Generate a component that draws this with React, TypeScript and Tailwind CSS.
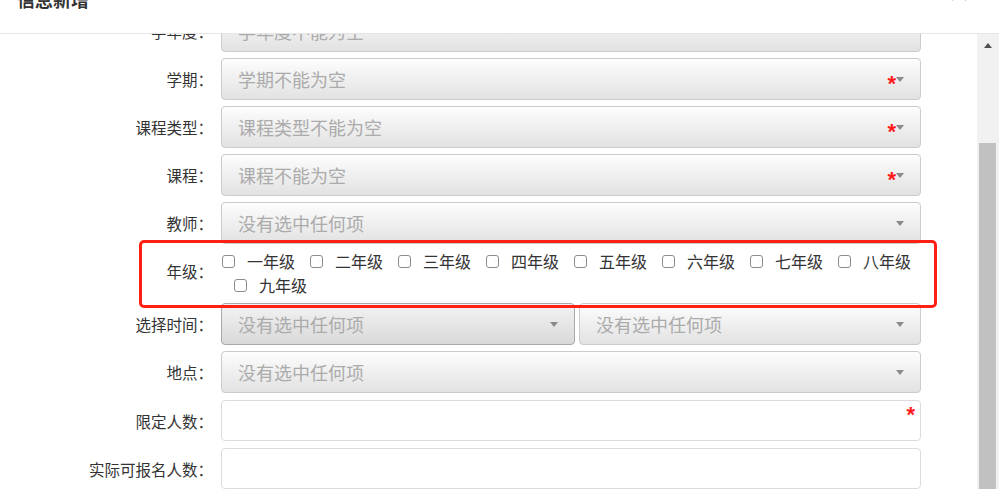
import React from "react";

const font = "font-['Noto_Sans_CJK_SC','Liberation_Sans',sans-serif]";
const labelCls = "w-[213px] text-right text-[15.5px] leading-[20px] text-[#333] [text-spacing-trim:space-all]";

function Caret() {
  return <span className="inline-block w-0 h-0 border-l-[4.5px] border-r-[4.5px] border-t-[5px] border-l-transparent border-r-transparent border-t-[#8a8a8a]" />;
}

function Star({ className = "" }: { className?: string }) {
  return (
    <span className={`font-['Liberation_Sans',sans-serif] font-bold text-[22px] leading-none text-[#ff1a1a] ${className}`}>*</span>
  );
}

function SelectBox({ text, required, dark, className = "w-[700px]" }: { text: string; required?: boolean; dark?: boolean; className?: string }) {
  return (
    <div
      className={`${className} h-[42px] flex items-center pl-[16px] pr-[16px] rounded-[4px] border bg-linear-to-b ${
        dark ? "border-[#a9a9a9] from-[#f3f3f3] to-[#d9d9d9]" : "border-[#cbcbcb] from-[#fdfdfd] to-[#e2e2e2]"
      }`}
    >
      <span className="flex-1 text-[18px] leading-[24px] text-[#ababab]">{text}</span>
      {required && <Star className="mt-[10px]" />}
      <Caret />
    </div>
  );
}

function Row({ label, children, className = "mb-[6px]" }: { label: string; children: React.ReactNode; className?: string }) {
  return (
    <div className={`flex items-center ${className}`}>
      <div className={labelCls}>{label}</div>
      <div className="ml-[8px] flex gap-[4px]">{children}</div>
    </div>
  );
}

const grades = ["一年级", "二年级", "三年级", "四年级", "五年级", "六年级", "七年级", "八年级"];

function Grade({ name }: { name: string }) {
  return (
    <div className="w-[88.6px] flex items-center h-[24px]">
      <span className="ml-[1px] w-[13px] h-[13px] border border-[#8c8c8c] rounded-[3px] bg-white" />
      <span className="ml-[12px] text-[16px] leading-[24px] text-[#333]">{name}</span>
    </div>
  );
}

export default function App() {
  return (
    <div className={`w-[999px] h-[489px] overflow-hidden bg-white ${font}`}>
      <header className="h-[34px] border-b border-[#e5e5e5] flex justify-between overflow-hidden">
        <h2 className="ml-[17px] -mt-[10px] text-[18px] leading-[18px] font-bold text-[#333]">信息新增</h2>
        <span className="mr-[28px] -mt-[20px] text-[24px] leading-[24px] text-[#c4c4c4]">×</span>
      </header>

      <div className="flex h-[455px]">
        <div className="w-[977px] overflow-hidden">
          <div className="-mt-[24px]">
            <Row label="学年度："><SelectBox text="学年度不能为空" /></Row>
            <Row label="学期："><SelectBox text="学期不能为空" required /></Row>
            <Row label="课程类型："><SelectBox text="课程类型不能为空" required /></Row>
            <Row label="课程："><SelectBox text="课程不能为空" required /></Row>
            <Row label="教师："><SelectBox text="没有选中任何项" /></Row>

            <div className="relative flex items-start h-[47px] mb-[6px]">
              <div className={`${labelCls} pt-[11px]`}>年级：</div>
              <div className="ml-[8px] w-[704px] flex flex-col -mt-[1px]">
                <div className="flex">
                  {grades.map((g) => <Grade key={g} name={g} />)}
                </div>
                <div className="flex pl-[12px]">
                  <Grade name="九年级" />
                </div>
              </div>
              <div className="absolute left-[139px] -top-[10px] w-[798px] h-[68px] border-[3.5px] border-[#ff2014] rounded-[5px]" />
            </div>

            <Row label="选择时间：">
              <SelectBox text="没有选中任何项" dark className="w-[354px]" />
              <SelectBox text="没有选中任何项" className="w-[342px]" />
            </Row>
            <Row label="地点：" className="mb-[7px]"><SelectBox text="没有选中任何项" /></Row>
            <Row label="限定人数：" className="mb-[7px]">
              <div className="relative w-[700px] h-[41px] border border-[#dcdcdc] rounded-[4px] bg-white">
                <Star className="absolute right-[5px] top-[3px]" />
              </div>
            </Row>
            <Row label="实际可报名人数：">
              <div className="w-[700px] h-[41px] border border-[#dcdcdc] rounded-[4px] bg-white" />
            </Row>
          </div>
        </div>

        <div className="w-[22px] bg-[#f1f1f1] flex flex-col">
          <div className="h-[109px] flex justify-center pt-[9px] pr-[1px]">
            <span className="w-0 h-0 border-l-[4px] border-r-[4px] border-b-[5px] border-l-transparent border-r-transparent border-b-[#505050]" />
          </div>
          <div className="ml-[2px] w-[17px] flex-1 bg-[#c1c1c1]" />
        </div>
      </div>
    </div>
  );
}
